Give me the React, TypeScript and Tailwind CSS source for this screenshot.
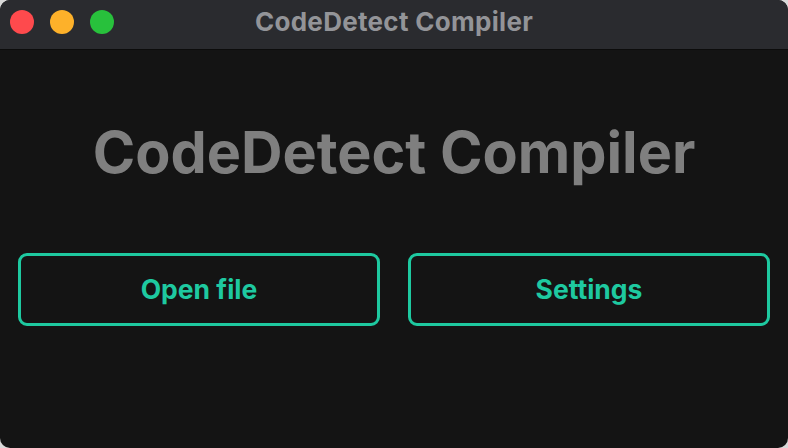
import React from "react";

export default function App() {
  return (
    <div className="w-[788px] h-[448px] bg-[#d9d9d9]" style={{ fontFamily: "Inter, 'Noto Sans', sans-serif" }}>
      <div className="w-full h-full rounded-[10px] overflow-hidden flex flex-col bg-[#141414]">
        <div className="h-[50px] shrink-0 bg-[#2a2b2f] border-b border-[#0c0c0c] flex items-start relative">
          <div className="flex items-center gap-[16px] pl-[10px] pt-[10px]">
            <span className="w-[24px] h-[24px] rounded-full bg-[#fe4a4d]" />
            <span className="w-[24px] h-[24px] rounded-full bg-[#fdb12a]" />
            <span className="w-[24px] h-[24px] rounded-full bg-[#28c13c]" />
          </div>
          <div className="absolute inset-x-0 top-0 h-[42px] flex items-center justify-center text-[26px] font-bold text-[#939498] tracking-[0.3px]">
            CodeDetect Compiler
          </div>
        </div>
        <div className="flex-1 flex flex-col px-[18px]">
          <div className="h-[203px] flex items-center justify-center pt-[2px]">
            <h1 className="text-[57.5px] font-bold text-[#7f7f7f] leading-none">CodeDetect Compiler</h1>
          </div>
          <div className="flex gap-[28px]">
            <button className="flex-1 h-[73px] rounded-[9px] border-[3px] border-[#1ec9a0] text-[#1ec9a0] text-[26.5px] font-bold">
              Open file
            </button>
            <button className="flex-1 h-[73px] rounded-[9px] border-[3px] border-[#1ec9a0] text-[#1ec9a0] text-[26.5px] font-bold">
              Settings
            </button>
          </div>
        </div>
      </div>
    </div>
  );
}
